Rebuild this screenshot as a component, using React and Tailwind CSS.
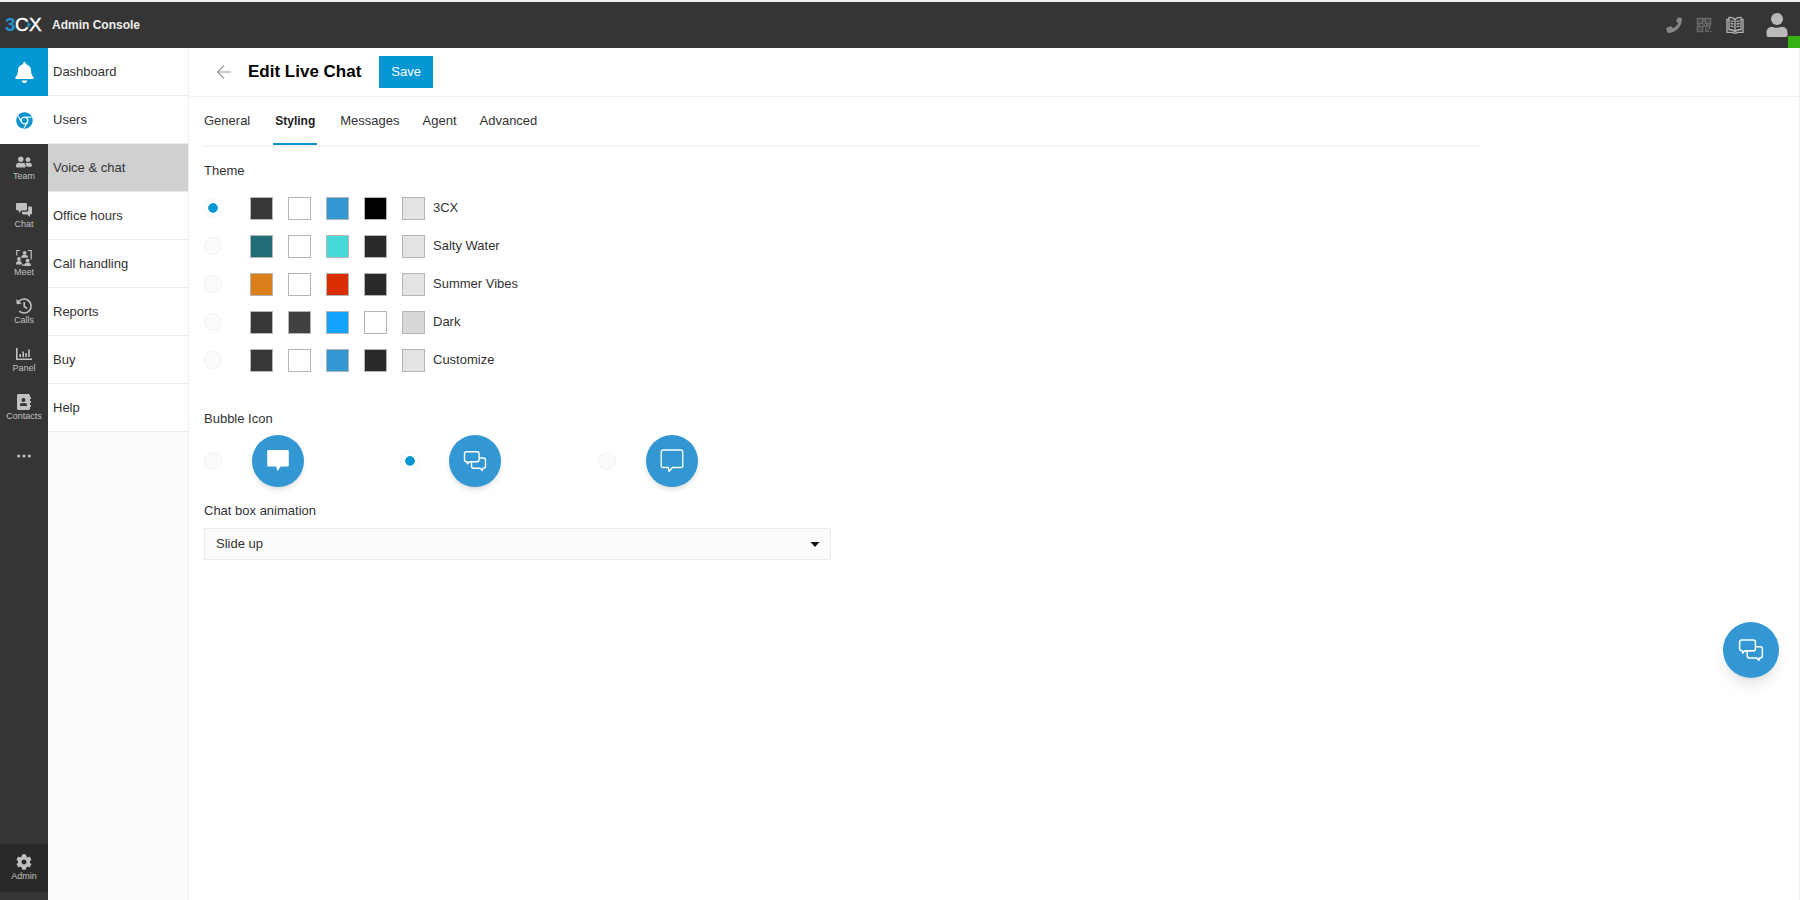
import { useState } from 'react';
import { FaBell, FaChrome, FaUserFriends, FaAddressBook, FaCog } from 'react-icons/fa';

const themes = [
  { name: '3CX', colors: ['#373737', '#ffffff', '#3297d3', '#000000', '#e4e4e4'] },
  { name: 'Salty Water', colors: ['#206c78', '#ffffff', '#46d9d7', '#292929', '#e4e4e4'] },
  { name: 'Summer Vibes', colors: ['#db7f1a', '#ffffff', '#d92e02', '#292929', '#e4e4e4'] },
  { name: 'Dark', colors: ['#373737', '#414141', '#14a4ff', '#ffffff', '#d8d8d8'] },
  { name: 'Customize', colors: ['#373737', '#ffffff', '#3297d3', '#292929', '#e4e4e4'] },
];

const menuItems = ['Dashboard', 'Users', 'Voice & chat', 'Office hours', 'Call handling', 'Reports', 'Buy', 'Help'];
const tabs = ['General', 'Styling', 'Messages', 'Agent', 'Advanced'];

const Logo = () => (
  <svg className="h-5 w-10" viewBox="0 0 40 20" fontFamily="'Liberation Sans', Arial, sans-serif" fontSize="19" aria-label="3CX">
    <text x="0" y="16" fill="#1f94cf" fontWeight="bold">3</text>
    <text x="10" y="16" fill="#ffffff" stroke="#ffffff" strokeWidth=".4">C</text>
    <text x="24" y="16" fill="#ffffff" stroke="#ffffff" strokeWidth=".4">X</text>
    <path d="M22.500 6.500l3.300 3.300-3.300 3.300z" fill="#1f94cf" />
  </svg>
);

const ChatIcon = () => (
  <svg className="size-4" viewBox="0 0 16 16" fill="currentColor">
    <path d="M1.200 1h8.600c.7 0 1.200.5 1.200 1.200v5.100c0 .7-.5 1.200-1.200 1.200H5.500L3 11V8.500H1.200C.5 8.500 0 8 0 7.300V2.200C0 1.500.5 1 1.200 1z" />
    <path d="M12.200 4.500h2.600c.7 0 1.200.5 1.200 1.200v5.600c0 .7-.5 1.200-1.200 1.200H14V15l-2.700-2.500H7.200c-.7 0-1.200-.5-1.200-1.200V9.700h4.800c.8 0 1.400-.6 1.400-1.400z" />
  </svg>
);

const MeetIcon = () => (
  <svg className="size-4" viewBox="0 0 16 16" fill="currentColor">
    <path d="M4 .5H.8v5M12 .5h3.200v9M6 15.200h3" fill="none" stroke="currentColor" strokeWidth="1.200" />
    <circle cx="8.600" cy="2.800" r="1.900" />
    <path d="M5.200 7.800c0-2.200 1-3.100 3.400-3.100s3.400.9 3.400 3.100z" />
    <circle cx="3" cy="9" r="1.900" />
    <path d="M0 14.400c0-2.400 1-3.400 3-3.400s3 1 3 3.400z" />
    <circle cx="11.600" cy="10.600" r="1.900" />
    <path d="M8.300 16c0-2.400 1-3.400 3.300-3.400s3.300 1 3.300 3.400z" />
  </svg>
);

const CallsIcon = () => (
  <svg className="size-4" viewBox="0 0 16 16" fill="none" stroke="currentColor" strokeWidth="1.600">
    <path d="M2 4.500A7 7 0 1 1 3.300 13.200" />
    <path d="M8.200 4v4.500l3 2" />
    <path d="M.3 1l.4 5.200 5-.7z" fill="currentColor" stroke="none" />
  </svg>
);

const PanelIcon = () => (
  <svg className="size-4" viewBox="0 0 16 16" fill="none" stroke="currentColor" strokeWidth="1.600">
    <path d="M.8 2v11.200H16" />
    <path d="M4.200 11V8M7.200 11V5.500M10 11V7M13 11V3.500" />
  </svg>
);

const DotsIcon = () => (
  <svg className="h-1 w-[14px]" viewBox="0 0 14 4" fill="currentColor">
    <circle cx="1.700" cy="2" r="1.600" />
    <circle cx="7" cy="2" r="1.600" />
    <circle cx="12.300" cy="2" r="1.600" />
  </svg>
);

const PhoneIcon = () => (
  <svg className="size-4" viewBox="0 0 16 16" fill="currentColor">
    <path d="M11.800.3l3.500.8c.4.100.7.400.7.900C16 9.700 9.700 16 2 16c-.4 0-.8-.3-.9-.7l-.8-3.500c-.1-.4.100-.8.500-1l3.700-1.600c.4-.1.800 0 1 .2l1.500 1.900c2.400-1.100 4.200-3 5.300-5.300l-1.900-1.500c-.3-.3-.4-.7-.2-1l1.600-2.700c.1-.4.600-.6 1-.5z" />
  </svg>
);

const QrIcon = () => (
  <svg className="size-4" viewBox="0 0 16 16" fill="none" stroke="currentColor" strokeWidth="1.600">
    <path d="M1.500 1.500h5v5h-5zM9.500 1.500h5v5h-5zM1.500 9.500h5v5h-5z" />
    <path d="M3.200 4h1.600M11.200 4h1.600M3.200 12h1.600M9 9.500h3M13.500 9v3M10 11v4M12 12.500v2.500M14 14.500h1.500M8 1v4M8 7v3M1 8h3M10 8h5" />
  </svg>
);

const BookIcon = () => (
  <svg className="size-[18px]" viewBox="1 1 18 18" fill="none" stroke="currentColor" strokeWidth="1.300">
    <path d="M10 4.500C8.300 2.800 6.300 2.300 4 2.500v12c2.300-.1 4.300.4 6 2 1.700-1.600 3.700-2.100 6-2v-12c-2.300-.2-4.300.3-6 2zM10 4.500v12" />
    <path d="M4 4.500H2V17.300h5.700c.8 1.200 3.800 1.200 4.600 0H18V4.500h-2" />
    <path d="M5.500 5.800c1.200 0 2.200.3 3 .8M5.500 8.500c1.200 0 2.200.3 3 .8M5.500 11.200c1.200 0 2.200.3 3 .8M14.500 5.800c-1.200 0-2.200.3-3 .8M14.500 8.500c-1.200 0-2.200.3-3 .8M14.500 11.200c-1.200 0-2.200.3-3 .8" />
  </svg>
);

const UserIcon = () => (
  <svg className="h-6 w-[22px]" viewBox="0 0 22 24" fill="currentColor">
    <circle cx="11" cy="6" r="6" />
    <path d="M.5 22v-2.500c0-3.500 2.200-5.500 5.500-5.500 1.500 0 2.500.8 5 .8s3.500-.8 5-.8c3.300 0 5.500 2 5.500 5.500V22c0 1.200-.8 2-2 2h-17c-1.200 0-2-.8-2-2z" />
  </svg>
);

const SolidBubble = () => (
  <svg className="size-6" viewBox="0 0 24 24" fill="#ffffff">
    <path d="M2.500 1h19c.8 0 1.300.5 1.300 1.300v14c0 .8-.5 1.300-1.300 1.300h-6.700L12 21.300c-.5.600-1.100.5-1.200-.3l-.4-3.400H2.500c-.8 0-1.300-.5-1.300-1.300v-14C1.200 1.500 1.700 1 2.500 1z" />
  </svg>
);

const DoubleBubble = ({ className = 'size-6' }) => (
  <svg className={className} viewBox="0 0 24 24" fill="none" stroke="#ffffff" strokeWidth="1.400" strokeLinejoin="round">
    <path d="M8.500 12.800H6.300l-1.800 2-.4-2h-.6c-1.200 0-2-.8-2-2V4.700c0-1.200.8-2 2-2h10.600c1.200 0 2 .8 2 2v6.100c0 1.200-.8 2-2 2H8.500" />
    <path d="M16.100 9h4.400c1.200 0 2 .8 2 2v6.300c0 1.200-.8 2-2 2h-.8l-.4 2.200-2.200-2.200h-6.600c-1.200 0-2-.8-2-2v-4.500" />
  </svg>
);

const OutlineBubble = () => (
  <svg className="size-6" viewBox="0 0 24 24" fill="none" stroke="#ffffff" strokeWidth="1.300" strokeLinejoin="round">
    <path d="M3.200 1h17.600c1.200 0 2 .8 2 2v13.500c0 1.200-.8 2-2 2h-8.300L9 22.500l-.5-4H3.200c-1.200 0-2-.8-2-2V3c0-1.200.8-2 2-2z" />
  </svg>
);

const railItems = [
  { label: 'Team', icon: <FaUserFriends size={16} /> },
  { label: 'Chat', icon: <ChatIcon /> },
  { label: 'Meet', icon: <MeetIcon /> },
  { label: 'Calls', icon: <CallsIcon /> },
  { label: 'Panel', icon: <PanelIcon /> },
  { label: 'Contacts', icon: <FaAddressBook size={16} /> },
];

const bubbles = [
  { id: 'solid', icon: <SolidBubble /> },
  { id: 'double', icon: <DoubleBubble /> },
  { id: 'outline', icon: <OutlineBubble /> },
];

const Radio = (props) => (
  <input
    type="radio"
    className="size-[18px] shrink-0 appearance-none rounded-full border border-[#f2f2f2] bg-[#fbfbfb] bg-clip-padding checked:border-4 checked:border-white checked:bg-[#0596d4] checked:ring-1 checked:ring-[#f5f5f5]"
    {...props}
  />
);

const RailButton = ({ icon, label, className = '' }) => (
  <button className={`flex h-12 w-full flex-col items-center pt-2.5 text-[#c0c0c0] ${className}`}>
    {icon}
    <span className="text-[9px] leading-3">{label}</span>
  </button>
);

export default function App() {
  const [tab, setTab] = useState('Styling');
  const [theme, setTheme] = useState('3CX');
  const [bubble, setBubble] = useState('double');

  return (
    <div className="flex min-h-screen flex-col bg-white font-['Liberation_Sans',Arial,sans-serif] text-[13px] leading-4 text-[#333333]">
      <header className="flex h-12 shrink-0 items-center border-t-2 border-[#eef1f4] bg-[#353535] pl-[5px] text-[#9a9a9a]">
        <Logo />
        <span className="ml-[7px] text-xs font-bold text-[#eeeeee]">Admin Console</span>
        <div className="ml-auto flex items-center gap-[14px] self-stretch">
          <button aria-label="Phone" className="text-[#858585]"><PhoneIcon /></button>
          <button aria-label="QR code" className="text-[#6c6c6c]"><QrIcon /></button>
          <button aria-label="Guide" className="text-[#b5b5b5]"><BookIcon /></button>
          <div className="flex self-stretch pl-2">
            <button aria-label="Account" className="text-[#b9b9b9]"><UserIcon /></button>
            <span className="size-3 self-end bg-[#36b212]" />
          </div>
        </div>
      </header>

      <div className="flex flex-1">
        <aside className="flex w-12 shrink-0 flex-col bg-[#353535]">
          <button aria-label="Notifications" className="flex h-12 items-center justify-center bg-[#0596d4] text-white">
            <FaBell size={21} />
          </button>
          <button aria-label="Chrome extension" className="flex h-12 items-center justify-center bg-white text-[#0f93cd]">
            <FaChrome size={17} />
          </button>
          {railItems.map((item) => (
            <RailButton key={item.label} {...item} />
          ))}
          <button aria-label="More" className="flex h-12 items-center justify-center text-[#c0c0c0]">
            <DotsIcon />
          </button>
          <RailButton icon={<FaCog size={16} />} label="Admin" className="mt-auto mb-2 bg-[#2b2928]" />
        </aside>

        <nav className="w-[141px] shrink-0 border-r border-[#f0f0f0] bg-[#fcfcfc]">
          {menuItems.map((item) => (
            <a
              key={item}
              href="#"
              className={`flex h-12 items-center border-b border-[#ececec] pl-[5px] ${item === 'Voice & chat' ? 'bg-[#d0d0d0]' : 'bg-white'}`}
            >
              {item}
            </a>
          ))}
        </nav>

        <main className="flex-1 border-r border-[#f0f0f0]">
          <div className="flex h-[49px] items-center border-b border-[#f0f0f0] pl-[27px]">
            <button aria-label="Back" className="text-[#9a9a9a]">
              <svg className="size-4" viewBox="0 0 16 16" fill="none" stroke="currentColor" strokeWidth="1.200">
                <path d="M15 8H1.500M8 1.500L1.500 8 8 14.500" />
              </svg>
            </button>
            <h1 className="ml-4 text-[17px] leading-5 font-bold text-black">Edit Live Chat</h1>
            <button className="ml-[18px] h-8 bg-[#0596d4] px-3 text-white">Save</button>
          </div>

          <div className="pl-[15px]">
            <div role="tablist" className="flex h-[50px] w-4/5 gap-[23px] border-b-2 border-[#f5f5f5]">
              {tabs.map((name) => (
                <button
                  key={name}
                  role="tab"
                  aria-selected={tab === name}
                  onClick={() => setTab(name)}
                  className={`border-b-2 pt-0.5 ${tab === name ? 'border-[#0f93cd] px-0.5 text-xs font-bold text-[#222222]' : 'border-transparent'}`}
                >
                  {name}
                </button>
              ))}
            </div>

            <fieldset className="mt-4">
              <legend>Theme</legend>
              <div className="pt-2.5">
                {themes.map(({ name, colors }) => (
                  <label key={name} className="flex h-[38px] items-center">
                    <Radio name="theme" checked={theme === name} onChange={() => setTheme(name)} />
                    <span className="ml-7 flex gap-[15px]">
                      {colors.map((color, i) => (
                        <span key={i} className="size-[23px] border border-[#b5b5b5]" style={{ backgroundColor: color }} />
                      ))}
                    </span>
                    <span className="ml-2">{name}</span>
                  </label>
                ))}
              </div>
            </fieldset>

            <fieldset className="mt-8">
              <legend>Bubble Icon</legend>
              <div className="flex pt-2">
                {bubbles.map(({ id, icon }) => (
                  <label key={id} aria-label={id} className="flex w-[197px] items-center">
                    <Radio name="bubble" checked={bubble === id} onChange={() => setBubble(id)} />
                    <span className="ml-[30px] flex size-[52px] items-center justify-center rounded-full bg-[#3297d3] shadow-md">{icon}</span>
                  </label>
                ))}
              </div>
            </fieldset>

            <label htmlFor="animation" className="mt-4 block">Chat box animation</label>
            <div className="mt-[9px] grid max-w-[627px] items-center">
              <select
                id="animation"
                className="col-start-1 row-start-1 h-8 appearance-none border border-[#ebebeb] bg-[#fcfcfc] pl-[11px]"
              >
                <option>Slide up</option>
                <option>Fade in</option>
                <option>No animation</option>
              </select>
              <svg className="pointer-events-none col-start-1 row-start-1 mr-[11px] h-[5px] w-[10px] justify-self-end" viewBox="0 0 10 5">
                <path d="M.5 0h9L5 5z" fill="#111111" />
              </svg>
            </div>
          </div>
        </main>
      </div>

      <button
        aria-label="Open chat"
        className="fixed right-[21px] bottom-[222px] flex size-14 items-center justify-center rounded-full bg-[#3297d3] shadow-lg"
      >
        <DoubleBubble className="size-[26px]" />
      </button>
    </div>
  );
}
